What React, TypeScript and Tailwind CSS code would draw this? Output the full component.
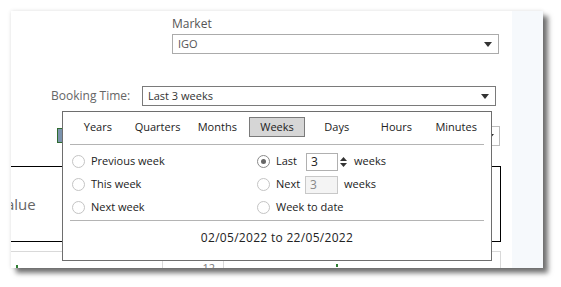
import React from "react";

const tabs = ["Years", "Quarters", "Months", "Weeks", "Days", "Hours", "Minutes"];

function Arrow() {
    return (
        <svg width="8" height="5" viewBox="0 0 8 5" className="shrink-0">
            <path d="M0 0 L8 0 L4 5 Z" fill="#333" />
        </svg>
    );
}

function Radio({ checked = false }: { checked?: boolean }) {
    return (
        <span
            className={`flex h-[13px] w-[13px] shrink-0 items-center justify-center rounded-full border bg-white ${
                checked ? "border-[#8a8a8a]" : "border-[#c4c4c4]"
            }`}
        >
            {checked && <span className="h-[5px] w-[5px] rounded-full bg-[#666]" />}
        </span>
    );
}

function DatePopup() {
    const left = ["Previous week", "This week", "Next week"];

    return (
        <div className="absolute left-[51px] top-[100px] h-[150px] w-[430px] border border-[#6e6e6e] bg-white text-[11px] text-[#222]">
            {/* Period tabs */}
            <div className="flex px-[5px] pt-[5px]">
                {tabs.map((tab) => (
                    <div key={tab} className="flex h-[20px] w-[60px] items-center justify-center">
                        {tab === "Weeks" ? (
                            <span className="flex h-[20px] w-[56px] items-center justify-center border border-[#7a7a7a] bg-[#d6d6d6]">
                                {tab}
                            </span>
                        ) : (
                            tab
                        )}
                    </div>
                ))}
            </div>
            <div className="mx-[7px] mt-[7px] border-t border-[#b4b4b4]" />

            {/* Options */}
            <div className="pt-[5px]">
                {left.map((label, i) => (
                    <div key={label} className="flex h-[23px] items-center">
                        <div className="flex w-[194px] items-center gap-[6px] pl-[9px]">
                            <Radio />
                            <span>{label}</span>
                        </div>
                        <div className="flex items-center gap-[6px]">
                            <Radio checked={i === 0} />
                            {i === 0 && (
                                <div className="flex items-center">
                                    <span className="w-[30px]">Last</span>
                                    <span className="flex h-[18px] w-[32px] items-center border border-[#b0b0b0] pl-[4px] text-[12px]">
                                        3
                                    </span>
                                    <span className="ml-[2px] flex w-[7px] flex-col items-center gap-[2px]">
                                        <svg width="7" height="4" viewBox="0 0 7 4">
                                            <path d="M0 4 L7 4 L3.5 0 Z" fill="#333" />
                                        </svg>
                                        <svg width="7" height="4" viewBox="0 0 7 4">
                                            <path d="M0 0 L7 0 L3.5 4 Z" fill="#333" />
                                        </svg>
                                    </span>
                                    <span className="ml-[7px]">weeks</span>
                                </div>
                            )}
                            {i === 1 && (
                                <div className="flex items-center">
                                    <span className="w-[29px]">Next</span>
                                    <span className="flex h-[18px] w-[33px] items-center border border-[#c8c8c8] bg-[#f4f4f4] pl-[4px] text-[12px] text-[#888]">
                                        3
                                    </span>
                                    <span className="ml-[6px]">weeks</span>
                                </div>
                            )}
                            {i === 2 && <span>Week to date</span>}
                        </div>
                    </div>
                ))}
            </div>
            <div className="mx-[7px] mt-[1px] border-t border-[#b4b4b4]" />

            <div className="mt-[9px] text-center text-[12px] leading-[16px] tracking-[0.3px]">
                02/05/2022 to 22/05/2022
            </div>
        </div>
    );
}

export default function App() {
    return (
        <div className="h-[287px] w-[561px] bg-white pl-[11px] pt-[11px] font-['Open_Sans',sans-serif]">
            <div className="flex h-[257px] w-[532px] shadow-[5px_5px_5px_rgba(0,0,0,0.55),0_0_4px_rgba(0,0,0,0.12)]">
                {/* Dashboard */}
                <div className="relative h-full w-[501px] overflow-hidden bg-white">
                    <div className="ml-[161px] pt-[5px]">
                        <div className="text-[12px] leading-[16px] text-[#555]">Market</div>
                        <div className="mt-[2px] flex h-[20px] w-[327px] items-center justify-between border border-[#ababab] pl-[5px] pr-[6px] text-[11px] text-[#555]">
                            <span>IGO</span>
                            <Arrow />
                        </div>
                    </div>

                    <div className="mt-[32px] flex items-center">
                        <span className="w-[131px] pl-[40px] text-[12px] text-[#666]">Booking Time:</span>
                        <div className="flex h-[20px] w-[354px] items-center justify-between border border-[#7a7a7a] pl-[5px] pr-[6px] text-[11px] text-[#333]">
                            <span>Last 3 weeks</span>
                            <Arrow />
                        </div>
                    </div>

                    <div className="mt-[20px] flex h-[20px] items-start">
                        <span className="ml-[46px] mt-[2px] h-[15px] w-[7px] border border-[#2f6b2f] bg-[#7b93ad]" />
                        <div className="ml-auto mr-[12px] flex h-[20px] w-[180px] items-center justify-end border border-[#bdbdbd] pr-[5px]">
                            <Arrow />
                        </div>
                    </div>

                    {/* KPI box */}
                    <div className="mt-[20px] flex h-[76px] w-[490px] items-center border-b border-r border-t border-black">
                        <span className="ml-[-14px] text-[15px] text-[#666]">Value</span>
                    </div>

                    {/* Table */}
                    <div className="mt-[9px] flex h-[30px] w-[490px] border-r border-t border-[#d9d9d9]">
                        <div className="relative w-[152px] border-r border-[#d9d9d9]">
                            <span className="absolute bottom-[13px] left-[5px] h-[3px] w-[2px] bg-[#2e7d32]" />
                        </div>
                        <div className="w-[61px] border-r border-[#d9d9d9] pr-[8px] pt-[8px] text-right text-[11px] text-[#777]">
                            12
                        </div>
                        <div className="relative flex-1">
                            <span className="absolute bottom-[14px] left-[112px] h-[3px] w-[2px] bg-[#2e7d32]" />
                        </div>
                    </div>

                    <DatePopup />
                </div>
                <div className="h-full flex-1 bg-[#f6f9fc]" />
            </div>
        </div>
    );
}
